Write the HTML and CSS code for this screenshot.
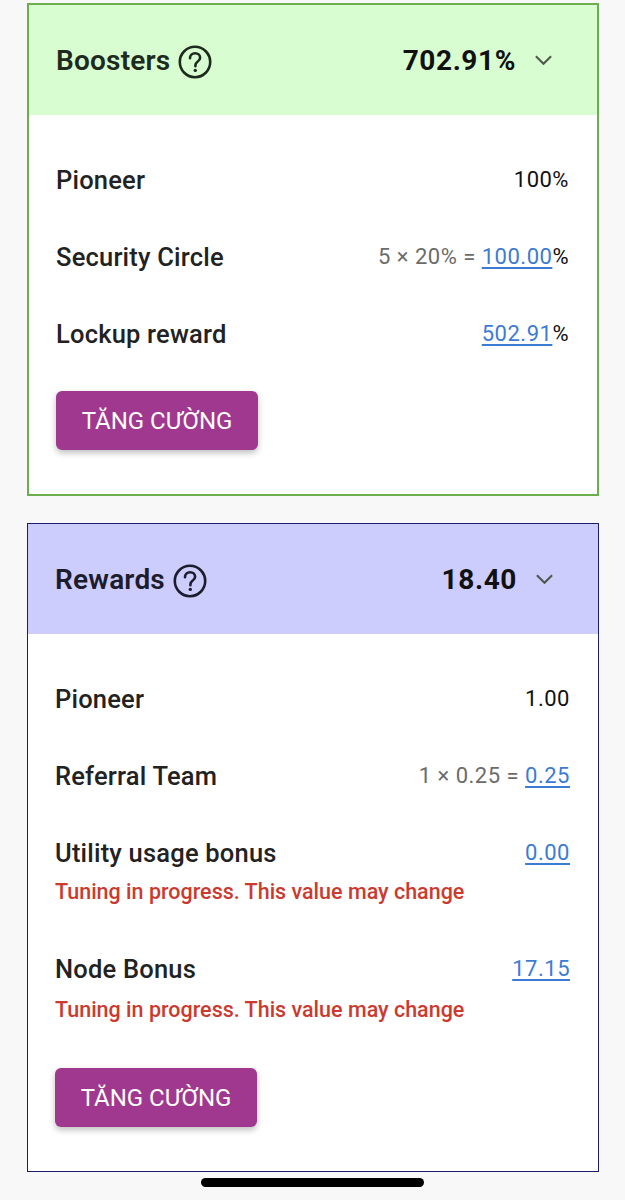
FILE: index.html
```html
<!DOCTYPE html>
<html lang="vi">
<head>
    <meta charset="UTF-8">
    <meta name="viewport" content="width=device-width, initial-scale=1.0">
    <title>Boosters &amp; Rewards</title>
    <link rel="stylesheet" href="styles.css">
</head>
<body>
    <main class="page">
        <section class="card boosters">
            <div class="card-head">
                <h2 class="title">Boosters
                    <svg class="help" viewBox="0 0 34 34" width="34" height="34">
                        <circle cx="17" cy="17" r="15.2" fill="none" stroke="currentColor" stroke-width="2.6"/>
                        <path d="M12 13.2c0-3 2.2-5 5.1-5 2.9 0 5 1.9 5 4.5 0 2.1-1.2 3.1-2.6 4.1-1.4 1-2.1 1.8-2.1 3.6v.8" fill="none" stroke="currentColor" stroke-width="2.6" stroke-linecap="round"/>
                        <circle cx="17.3" cy="25.4" r="1.7" fill="currentColor"/>
                    </svg>
                </h2>
                <div class="total">702.91%
                    <svg class="chev" viewBox="0 0 20 12" width="19" height="12">
                        <path d="M2 2l8 8 8-8" fill="none" stroke="currentColor" stroke-width="2.2"/>
                    </svg>
                </div>
            </div>
            <div class="card-body">
                <div class="rows">
                    <div class="row"><span class="label">Pioneer</span><span class="value">100%</span></div>
                    <div class="row"><span class="label">Security Circle</span><span class="value"><span class="calc">5 × 20% = </span><a href="#">100.00</a>%</span></div>
                    <div class="row"><span class="label">Lockup reward</span><span class="value"><a href="#">502.91</a>%</span></div>
                </div>
                <button type="button" class="boost">TĂNG CƯỜNG</button>
            </div>
        </section>

        <section class="card rewards">
            <div class="card-head">
                <h2 class="title">Rewards
                    <svg class="help" viewBox="0 0 34 34" width="34" height="34">
                        <circle cx="17" cy="17" r="15.2" fill="none" stroke="currentColor" stroke-width="2.6"/>
                        <path d="M12 13.2c0-3 2.2-5 5.1-5 2.9 0 5 1.9 5 4.5 0 2.1-1.2 3.1-2.6 4.1-1.4 1-2.1 1.8-2.1 3.6v.8" fill="none" stroke="currentColor" stroke-width="2.6" stroke-linecap="round"/>
                        <circle cx="17.3" cy="25.4" r="1.7" fill="currentColor"/>
                    </svg>
                </h2>
                <div class="total">18.40
                    <svg class="chev" viewBox="0 0 20 12" width="19" height="12">
                        <path d="M2 2l8 8 8-8" fill="none" stroke="currentColor" stroke-width="2.2"/>
                    </svg>
                </div>
            </div>
            <div class="card-body">
                <div class="rows">
                    <div class="row"><span class="label">Pioneer</span><span class="value">1.00</span></div>
                    <div class="row"><span class="label">Referral Team</span><span class="value"><span class="calc">1 × 0.25 = </span><a href="#">0.25</a></span></div>
                    <div class="group">
                        <div class="row"><span class="label">Utility usage bonus</span><span class="value"><a href="#">0.00</a></span></div>
                        <p class="note">Tuning in progress. This value may change</p>
                    </div>
                    <div class="group">
                        <div class="row"><span class="label">Node Bonus</span><span class="value"><a href="#">17.15</a></span></div>
                        <p class="note">Tuning in progress. This value may change</p>
                    </div>
                </div>
                <button type="button" class="boost">TĂNG CƯỜNG</button>
            </div>
        </section>
    </main>
    <div class="home-bar"></div>
</body>
</html>
```

FILE: styles.css
```css
/* General styles */
body {
    margin: 0;
    background-color: #f8f8f8;
    font-family: Roboto, "Noto Sans", Arial, sans-serif;
    color: #1c1c1c;
}

.page {
    padding: 3px 26px 0 27px;
    display: flex;
    flex-direction: column;
    gap: 27px;
}

/* Cards */
.card {
    background: #fff;
    border: 2px solid #6aae4e;
}

.card.rewards {
    border: 1.5px solid #1d1d6e;
}

.card-head {
    height: 110px;
    display: flex;
    align-items: center;
    justify-content: space-between;
    padding: 0 44px 0 27px;
    background-color: #d8fdd0;
}

.rewards .card-head {
    background-color: #cccdfc;
}

.title {
    margin: 0;
    display: flex;
    align-items: center;
    gap: 8px;
    font-size: 28px;
    font-weight: 600;
    letter-spacing: 0.2px;
    color: #1d2a1d;
}

.rewards .title {
    color: #1c1c2c;
}

.help {
    margin-top: 4px;
}

.total {
    display: flex;
    align-items: center;
    gap: 18px;
    font-size: 28px;
    font-weight: 700;
    letter-spacing: 0.6px;
    color: #111;
}

.chev {
    color: #4d5a4d;
}

.card-body {
    padding: 50px 28px 44px 27px;
}

/* Rows */
.rows {
    display: flex;
    flex-direction: column;
    gap: 47px;
}

.group + .group {
    margin-top: 2px;
}

.row {
    display: flex;
    justify-content: space-between;
    align-items: center;
    line-height: 30px;
}

.label {
    font-size: 25.5px;
    font-weight: 500;
    letter-spacing: 0.2px;
    color: #222;
}

.value {
    font-size: 22px;
    letter-spacing: 0.5px;
    color: #111;
}

.calc {
    color: #6b6b6b;
}

.value a {
    color: #3c7bd4;
    text-decoration: underline;
    text-underline-offset: 3px;
}

.note {
    margin: 11px 0 0;
    font-size: 21.5px;
    line-height: 26px;
    font-weight: 500;
    color: #cc3a2f;
}

.group + .group .note {
    margin-top: 13px;
}

/* Button */
.boost {
    margin-top: 42px;
    width: 202px;
    height: 59px;
    border: none;
    border-radius: 6px;
    background-color: #a0388f;
    color: #fff;
    font-family: Roboto, "Noto Sans", Arial, sans-serif;
    font-size: 24px;
    font-weight: 400;
    box-shadow: 0 3px 6px rgba(0, 0, 0, 0.25);
    cursor: pointer;
}

.rewards .boost {
    margin-top: 45px;
}

.home-bar {
    width: 223px;
    height: 9px;
    margin: 6px auto 0;
    border-radius: 5px;
    background: #000;
}
```
